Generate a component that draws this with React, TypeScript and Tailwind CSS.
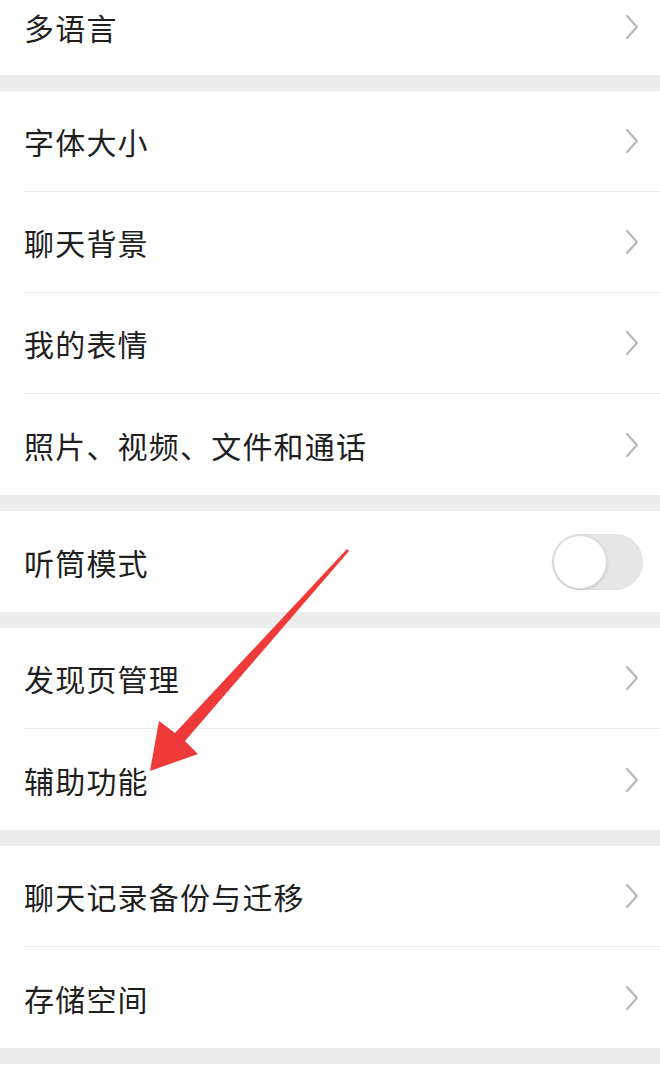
const font = { fontFamily: '"Noto Sans CJK SC", "Noto Sans", sans-serif' };

function Chevron() {
  return (
    <svg width="16" height="26" viewBox="0 0 16 26" fill="none" className="shrink-0">
      <path d="M3 2l10 11L3 24" stroke="#b8b8b8" strokeWidth="2.2" strokeLinecap="round" strokeLinejoin="round" />
    </svg>
  );
}

function Toggle() {
  return (
    <div className="relative w-[91px] h-[56px] -mr-[3px] rounded-full bg-[#e6e6e6] border border-[#e0e0e0] shrink-0">
      <div className="absolute left-0 top-0 w-[54px] h-[54px] rounded-full bg-white border border-[#dcdcdc] shadow-[0_1px_3px_rgba(0,0,0,0.15)]" />
    </div>
  );
}

function Row({ label, last, toggle }: { label: string; last?: boolean; toggle?: boolean }) {
  return (
    <div className="pl-[24px] bg-white">
      <div
        className={
          "flex items-center justify-between h-[101px] pr-[20px] " +
          (last ? "" : "border-b border-[#ebebeb]")
        }
      >
        <span className="text-[30px] text-[#1f1f1f] leading-none tracking-[1.2px]">{label}</span>
        {toggle ? <Toggle /> : <Chevron />}
      </div>
    </div>
  );
}

function Group({ items, toggle }: { items: string[]; toggle?: boolean }) {
  return (
    <div className="bg-white">
      {items.map((t, i) => (
        <Row key={t} label={t} last={i === items.length - 1} toggle={toggle} />
      ))}
    </div>
  );
}

function Band() {
  return <div className="h-[16px] bg-[#ededed]" />;
}

export default function App() {
  return (
    <div className="relative w-[660px] h-[1080px] overflow-hidden bg-white" style={font}>
      <div className="pl-[24px] bg-white">
        <div className="flex items-center justify-between h-[75px] pb-[22px] pr-[20px]">
          <span className="text-[30px] text-[#1f1f1f] leading-none tracking-[1.2px]">多语言</span>
          <Chevron />
        </div>
      </div>
      <Band />
      <Group items={["字体大小", "聊天背景", "我的表情", "照片、视频、文件和通话"]} />
      <Band />
      <Group items={["听筒模式"]} toggle />
      <Band />
      <Group items={["发现页管理", "辅助功能"]} />
      <Band />
      <Group items={["聊天记录备份与迁移", "存储空间"]} />
      <Band />
      <div className="h-[20px] bg-white" />

      <svg className="absolute left-0 top-0 pointer-events-none" width="660" height="1080" viewBox="0 0 660 1080">
        <polygon
          points="349,551 185,741 198,754 150,771 159,721 175,733 347,549"
          fill="#f03a3a"
        />
      </svg>
    </div>
  );
}
